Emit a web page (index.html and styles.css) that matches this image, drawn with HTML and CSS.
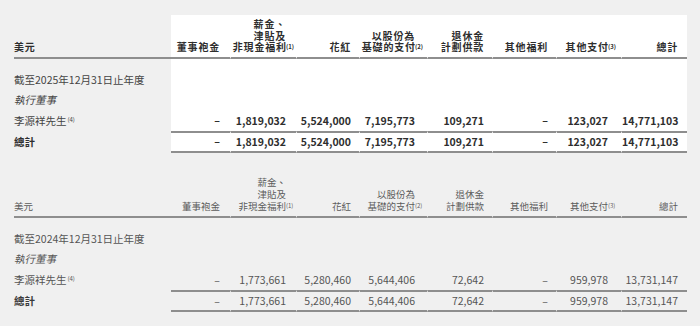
FILE: index.html
```html
<!DOCTYPE html>
<html lang="zh-Hant">
<head>
<meta charset="utf-8">
<title>董事薪酬</title>
<link rel="stylesheet" href="styles.css">
</head>
<body>
<div class="page">
  <table class="comp comp--hl">
    <colgroup>
      <col class="c-lbl"><col class="c1"><col class="c2"><col class="c3"><col class="c4"><col class="c5"><col class="c6"><col class="c7"><col class="c8">
    </colgroup>
    <thead>
      <tr>
        <th class="lbl">美元</th>
        <th class="num">董事袍金</th>
        <th class="num">薪金、<br>津貼及<br>非現金福利<span class="fn"><span>(1)</span></span></th>
        <th class="num">花紅</th>
        <th class="num">以股份為<br>基礎的支付<span class="fn"><span>(2)</span></span></th>
        <th class="num">退休金<br>計劃供款</th>
        <th class="num">其他福利</th>
        <th class="num">其他支付<span class="fn"><span>(3)</span></span></th>
        <th class="num last">總計</th>
      </tr>
    </thead>
    <tbody>
      <tr class="first">
        <td class="lbl">截至2025年12月31日止年度</td>
        <td class="num"></td><td class="num"></td><td class="num"></td><td class="num"></td><td class="num"></td><td class="num"></td><td class="num"></td><td class="num last"></td>
      </tr>
      <tr>
        <td class="lbl it">執行董事</td>
        <td class="num"></td><td class="num"></td><td class="num"></td><td class="num"></td><td class="num"></td><td class="num"></td><td class="num"></td><td class="num last"></td>
      </tr>
      <tr>
        <td class="lbl">李源祥先生<sup class="ref">(4)</sup></td>
        <td class="num">–</td><td class="num">1,819,032</td><td class="num">5,524,000</td><td class="num">7,195,773</td><td class="num">109,271</td><td class="num">–</td><td class="num">123,027</td><td class="num last">14,771,103</td>
      </tr>
      <tr class="total">
        <td class="lbl">總計</td>
        <td class="num">–</td><td class="num">1,819,032</td><td class="num">5,524,000</td><td class="num">7,195,773</td><td class="num">109,271</td><td class="num">–</td><td class="num">123,027</td><td class="num last">14,771,103</td>
      </tr>
    </tbody>
  </table>

  <table class="comp comp--prev">
    <colgroup>
      <col class="c-lbl"><col class="c1"><col class="c2"><col class="c3"><col class="c4"><col class="c5"><col class="c6"><col class="c7"><col class="c8">
    </colgroup>
    <thead>
      <tr>
        <th class="lbl">美元</th>
        <th class="num">董事袍金</th>
        <th class="num">薪金、<br>津貼及<br>非現金福利<span class="fn"><span>(1)</span></span></th>
        <th class="num">花紅</th>
        <th class="num">以股份為<br>基礎的支付<span class="fn"><span>(2)</span></span></th>
        <th class="num">退休金<br>計劃供款</th>
        <th class="num">其他福利</th>
        <th class="num">其他支付<span class="fn"><span>(3)</span></span></th>
        <th class="num last">總計</th>
      </tr>
    </thead>
    <tbody>
      <tr class="first">
        <td class="lbl">截至2024年12月31日止年度</td>
        <td class="num"></td><td class="num"></td><td class="num"></td><td class="num"></td><td class="num"></td><td class="num"></td><td class="num"></td><td class="num last"></td>
      </tr>
      <tr>
        <td class="lbl it">執行董事</td>
        <td class="num"></td><td class="num"></td><td class="num"></td><td class="num"></td><td class="num"></td><td class="num"></td><td class="num"></td><td class="num last"></td>
      </tr>
      <tr>
        <td class="lbl">李源祥先生<sup class="ref">(4)</sup></td>
        <td class="num">–</td><td class="num">1,773,661</td><td class="num">5,280,460</td><td class="num">5,644,406</td><td class="num">72,642</td><td class="num">–</td><td class="num">959,978</td><td class="num last">13,731,147</td>
      </tr>
      <tr class="total">
        <td class="lbl">總計</td>
        <td class="num">–</td><td class="num">1,773,661</td><td class="num">5,280,460</td><td class="num">5,644,406</td><td class="num">72,642</td><td class="num">–</td><td class="num">959,978</td><td class="num last">13,731,147</td>
      </tr>
    </tbody>
  </table>
</div>
</body>
</html>
```

FILE: styles.css
```css
html, body {
  margin: 0;
  padding: 0;
  background: #f0f0f0;
}

.page {
  padding: 15px 13px 0 14px;
  font-family: "Noto Sans CJK TC", "Noto Sans", sans-serif;
}

.comp {
  width: 673px;
  table-layout: fixed;
  border-collapse: separate;
  border-spacing: 0;
  --bg: #f0f0f0;
  --line: #8e8e8e;
}

.comp + .comp {
  margin-top: 20px;
}

.c-lbl { width: 157px; }
.c1 { width: 60px; }
.c2 { width: 66px; }
.c3 { width: 63px; }
.c4 { width: 68px; }
.c5 { width: 65px; }
.c6 { width: 64px; }
.c7 { width: 65px; }
.c8 { width: 65px; }

.comp th,
.comp td {
  padding: 0;
  white-space: nowrap;
}

.comp th {
  vertical-align: bottom;
  font-size: 10px;
  line-height: 11.6px;
  padding-top: 3px;
  padding-bottom: 4px;
  border-bottom: 2px solid var(--line);
  text-align: right;
}

.comp th.lbl {
  text-align: left;
}

.comp td {
  height: 20.5px;
  font-size: 10.5px;
  line-height: 20.5px;
  vertical-align: middle;
}

.comp .lbl {
  text-align: left;
}

.comp .num {
  text-align: right;
  border-right: 1px solid var(--bg);
}

.comp .num.last {
  border-right: 0;
}

.comp tr.first td {
  padding-top: 10.75px;
}

.comp tr.total td {
  height: 18px;
  line-height: 18px;
}

.comp tr.total td.lbl {
  font-weight: 700;
}

.comp tr.total td.num {
  border-top: 2px solid var(--line);
  border-bottom: 2px solid var(--line);
}

.comp .it {
  font-style: italic;
}

/* column right insets */
.comp tr > :nth-child(2) { padding-right: 10px; }
.comp tr > :nth-child(3) { padding-right: 10px; }
.comp tr > :nth-child(4) { padding-right: 8px; }
.comp tr > :nth-child(5) { padding-right: 12px; }
.comp tr > :nth-child(6) { padding-right: 8px; }
.comp tr > :nth-child(7) { padding-right: 8px; }
.comp tr > :nth-child(8) { padding-right: 13px; }
.comp tr > :nth-child(9) { padding-right: 9px; }

/* hanging footnote marker in headers */
.fn {
  display: inline-block;
  width: 0;
  vertical-align: top;
  font-size: 6px;
  line-height: 9px;
  letter-spacing: 0;
  text-align: left;
}

.fn > span {
  display: inline-block;
  padding-top: 1px;
}

.ref {
  font-size: 6px;
  line-height: 0;
  vertical-align: 3px;
  margin-left: 1px;
}

/* highlighted current year */
.comp--hl {
  --bg: #ffffff;
  color: #3a3a3a;
}

.comp--hl .num {
  background: #ffffff;
}

.comp--hl th {
  color: #2e2e2e;
  font-weight: 700;
  letter-spacing: 0.8px;
}

.comp--hl .fn {
  margin-left: -0.8px;
}

.comp--hl td.num {
  font-weight: 700;
  color: #2e2e2e;
}

.comp--hl td.lbl {
  color: #444;
}

.comp--hl tr.total td.lbl {
  color: #2e2e2e;
}

/* previous year */
.comp--prev {
  color: #555;
}

.comp--prev th {
  font-weight: 400;
  font-size: 9.5px;
  line-height: 12px;
  color: #5c5c5c;
}

.comp--prev tr.total td.lbl {
  color: #3a3a3a;
}
```
